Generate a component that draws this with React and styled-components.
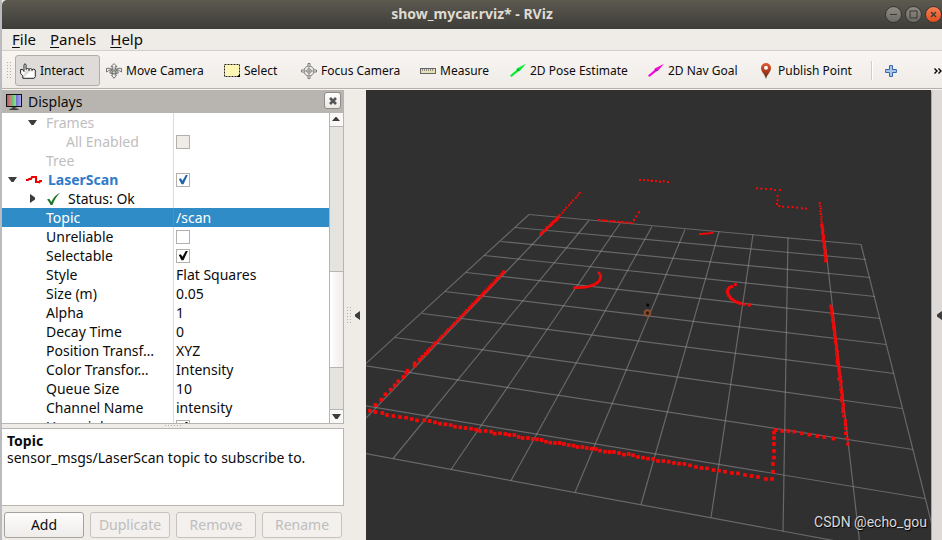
import React from 'react';
import styled, { createGlobalStyle, css } from 'styled-components';

const GlobalStyle = createGlobalStyle`
  * {
    box-sizing: border-box;
  }
  body {
    margin: 0;
    font-family: "Noto Sans", "Open Sans", sans-serif;
    font-size: 14px;
    color: #0c0c0c;
    overflow: hidden;
  }
  button, input {
    font: inherit;
    color: inherit;
    margin: 0;
  }
`

const Window = styled.div`
  height: 100vh;
  display: flex;
  flex-direction: column;
  background: #efebe7;
  border-left: 2px solid #b9bbbe;
`

// ---- title bar ----

const TitleBar = styled.header`
  flex: none;
  height: 29px;
  display: grid;
  grid-template-columns: 1fr auto 1fr;
  align-items: center;
  background: linear-gradient(#5c5a4f, #56544c 20%, #3d3c38);
  border-top-left-radius: 5px;
`
const Title = styled.h1`
  grid-column: 2;
  margin: 0;
  padding-bottom: 2px;
  font-size: 14px;
  line-height: 20px;
  font-weight: 700;
  color: #dfdbd2;
`
const WindowButtons = styled.div`
  display: flex;
  justify-content: flex-end;
  gap: 3px;
`
const WindowButton = styled.button`
  width: 17px;
  height: 17px;
  padding: 0;
  border: 1px solid #35342f;
  border-radius: 50%;
  background: ${({ $close }) => ($close ? 'linear-gradient(#f58055, #e2501f)' : 'linear-gradient(#8d8b83, #6d6b65)')};
  color: #3a3934;
  svg {
    display: block;
  }
`

// ---- menu ----

const MenuBar = styled.nav`
  flex: none;
  height: 22px;
  display: flex;
  align-items: center;
  gap: 14px;
  padding: 0 0 2px 10px;
  border-bottom: 1px solid #d2cfca;
`
const MenuItem = styled.button`
  padding: 0;
  border: 0;
  background: none;
  font-size: 15px;
  line-height: 20px;
  u {
    text-decoration-thickness: 1px;
    text-underline-offset: 2px;
  }
`

// ---- tool bar ----

const ToolBar = styled.div`
  flex: none;
  height: 39px;
  display: flex;
  align-items: center;
  gap: 1px;
  padding: 1px 0 0 5px;
  background: linear-gradient(#f8f5f2, #efebe7);
  border-bottom: 1px solid #f6f3f0;
  box-shadow: inset 0 -1px #b5b1ad;
`
const Grip = styled.div`
  flex: none;
  width: ${({ $wide }) => ($wide ? '17px' : '4px')};
  height: ${({ $wide }) => ($wide ? '2px' : '17px')};
  background: conic-gradient(from 270deg at 1px 1px, #b0aca7 90deg, transparent 0) 0 0 / 3px 3px;
`
const ToolGrip = styled(Grip)`
  margin-right: 3px;
`
const ToolButton = styled.button`
  flex: none;
  width: ${({ $width }) => $width}px;
  height: 31px;
  padding: 0 0 0 4px;
  display: flex;
  align-items: center;
  gap: 4px;
  font-size: 12px;
  white-space: nowrap;
  border: 1px solid transparent;
  border-radius: 3px;
  background: none;
  ${({ $pressed }) => $pressed && css`
    border-color: #b1ada9;
    background: #dfdbd8;
  `}
  svg {
    flex: none;
  }
`
const ToolSeparator = styled.div`
  width: 2px;
  height: 19px;
  margin-right: 11px;
  background: linear-gradient(90deg, #d0ccc8 50%, #fff 50%);
`
const IconButton = styled.button`
  padding: 0;
  border: 0;
  background: none;
  display: flex;
`
const MoreButton = styled(IconButton)`
  margin-left: auto;
`

// ---- work area ----

const Main = styled.main`
  flex: 1;
  min-height: 0;
  display: flex;
`
const Dock = styled.section`
  flex: none;
  width: 342px;
  display: flex;
  flex-direction: column;
  padding-bottom: 2px;
`
const DockHeader = styled.div`
  flex: none;
  height: 23px;
  display: flex;
  align-items: center;
  gap: 6px;
  padding: 0 3px 0 4px;
  background: #b8b4b0;
`
const DockTitle = styled.h2`
  flex: 1;
  margin: 0;
  font-size: 14px;
  font-weight: 400;
  line-height: 20px;
`
const CloseButton = styled.button`
  width: 17px;
  height: 17px;
  padding: 0;
  margin-bottom: 2px;
  display: grid;
  place-items: center;
  border: 1px solid #8f8c88;
  border-radius: 3px;
  background: linear-gradient(#fff, #ebe8e5);
`
const TreeFrame = styled.div`
  flex: 1;
  min-height: 0;
  display: flex;
  background: #fff;
  border-right: 1px solid #b8b4b0;
  border-bottom: 1px solid #b8b4b0;
`
const TreeScroll = styled.div`
  flex: 1;
  min-width: 0;
  overflow: hidden;
`
const Tree = styled.table`
  width: 100%;
  table-layout: fixed;
  border-collapse: separate;
  border-spacing: 0;
`
const Row = styled.tr`
  height: 19px;
  line-height: 19px;
  color: ${({ $selected, $muted }) => ($selected ? '#fff' : $muted ? '#bebebe' : 'inherit')};
  background: ${({ $selected }) => ($selected ? '#308cc6' : 'none')};
`
const NameCell = styled.th`
  width: 172px;
  padding: 0;
  font-weight: 400;
  text-align: left;
  border-right: 1px solid ${({ $selected }) => ($selected ? '#4c8fbd' : '#dcdcdc')};
`
const Name = styled.div`
  height: 19px;
  display: flex;
  align-items: center;
  padding-left: ${({ $depth }) => $depth * 20}px;
  white-space: nowrap;
  ${({ $title }) => $title && css`
    font-weight: 700;
    color: #2f7bc8;
  `}
`
const Expander = styled.span`
  flex: none;
  width: 20px;
  margin-right: 4px;
  display: flex;
  justify-content: center;
`
const RowIcon = styled.span`
  flex: none;
  display: flex;
  margin-right: 6px;
`
const ValueCell = styled.td`
  padding: 0 0 0 2px;
`
const CheckBox = styled.input`
  appearance: none;
  display: grid;
  place-items: center;
  width: 14px;
  height: 14px;
  border: 1px solid #b3b0ac;
  background: #fff;
  color: #0c0c0c;
  &:disabled {
    background: #efebe7;
  }
  &:checked::before {
    content: "";
    width: 10px;
    height: 10px;
    background: ${({ $blue }) => ($blue ? '#1f66ad' : '#0c0c0c')};
    clip-path: polygon(8% 45%, 28% 38%, 45% 62%, 80% 0, 98% 5%, 55% 98%, 35% 98%);
  }
`

const ScrollBar = styled.div`
  flex: none;
  width: 14px;
  display: flex;
  flex-direction: column;
  border-left: 1px solid #b8b4b0;
  background: #e4e3e0;
`
const ScrollArrow = styled.button`
  height: 14px;
  padding: 0;
  display: grid;
  place-items: center;
  border: 0 solid #b8b4b0;
  border-width: ${({ $down }) => ($down ? '1px 0 0' : '0 0 1px')};
  background: #f9f8f7;
`
const ScrollGap = styled.div`
  flex: ${({ $part }) => $part};
`
const ScrollThumb = styled.div`
  flex: 96;
  border: 1px solid #b8b4b0;
  border-width: 1px 0;
  background: linear-gradient(90deg, #fff, #efedeb);
`

const Splitter = styled.div`
  flex: none;
  height: 4px;
  display: flex;
  align-items: center;
  justify-content: center;
`
const Description = styled.div`
  flex: none;
  height: 78px;
  padding: 3px 5px;
  border: 1px solid #b8b4b0;
  border-left: 0;
  background: #fff;
  line-height: 17px;
  p {
    margin: 0;
  }
`
const Actions = styled.div`
  flex: none;
  display: flex;
  gap: 6px;
  padding: 6px 2px 0;
`
const ActionButton = styled.button`
  flex: 1;
  min-width: 0;
  height: 26px;
  padding: 0 0 2px;
  border: 1px solid #a5a19d;
  border-radius: 3px;
  background: linear-gradient(#fdfcfc, #efecea);
  &:disabled {
    color: #bebebe;
    border-color: #c6c3bf;
    background: #f3f0ed;
  }
`
const SideHandle = styled.div`
  flex: none;
  width: 22px;
  display: flex;
  align-items: center;
  justify-content: space-between;
  padding: 0 6px 0 3px;
`
const RightHandle = styled.button`
  flex: none;
  width: 11px;
  padding: 0;
  display: flex;
  align-items: center;
  justify-content: flex-end;
  border: 0;
  border-left: 1px solid #aaa6a2;
  border-top-left-radius: 3px;
  background: #dedad7;
`
const Viewport = styled.div`
  flex: 1;
  min-width: 0;
  position: relative;
  background: #303030;
  overflow: hidden;
`
const Scene = styled.svg`
  display: block;
  width: 100%;
  height: 100%;
`
const Credit = styled.span`
  position: absolute;
  right: 4px;
  bottom: 8px;
  font: 14px/20px Roboto, "Liberation Sans", sans-serif;
  color: #d9d9d9;
  text-shadow: 1px 1px 1px #000;
`

// ---- icons ----

const HandIcon = () => (
  <svg width="16" height="16" viewBox="0 0 16 16">
    <path
      d="M2.8 15.3 V12.8 L.6 10.3 V6.5 H2.6 L4 8.5 V1.6 Q5 -.1 6 1.6 V6.6 M6 6.2 Q7.5 4.8 9 6.2 V8 M9 6.2 Q10.5 4.9 12 6.4 V8.2 M12 6.8 Q14 5.4 15.3 7 V13.6 L14.2 15.3 H2.8"
      fill="#fff"
      stroke="#262626"
      strokeLinejoin="round"
    />
  </svg>
)

const MoveIcon = () => (
  <svg width="16" height="16" viewBox="0 0 16 16" fill="#f4f2ef" stroke="#696969" strokeWidth=".9">
    <path d="M8 .6 L11 3.6 H9.2 V6.2 H12.4 V5.4 H15.5 V9 L13.6 7.8 H9.2 V12 H10.6 L8 15.3 L5.4 12 H6.8 V7.8 H2.4 L.5 9 V5.4 H3.6 V6.2 H6.8 V3.6 H5 Z" />
    <path d="M3.5 9.8 L6 7.4 L3.8 5.4 M12.5 9.8 L10 7.4 L12.2 5.4 M5.3 5 L8 7.4 L10.7 5 M4.8 10.4 L8 7.4 L11.2 10.4 M3.6 9.8 Q8 12 12.4 9.8" fill="none" />
  </svg>
)

const SelectIcon = () => (
  <svg width="16" height="16" viewBox="0 0 16 16">
    <rect x=".5" y="1.5" width="15" height="12" fill="#fff6b5" stroke="#222" strokeDasharray="2 1" />
    <path d="M16 11 V14 H12.5 Z" />
  </svg>
)

const FocusIcon = () => (
  <svg width="16" height="16" viewBox="0 0 16 16" fill="none" stroke="#787878">
    <circle cx="8" cy="8" r="5" />
    <circle cx="8" cy="8" r="2.3" strokeWidth=".8" />
    <path d="M8 3 V13 M3 8 H13" strokeWidth=".8" />
    <path d="M7 3 V.5 H9 V3 M7 13 V15.5 H9 V13 M3 7 H.5 V9 H3 M13 7 H15.5 V9 H13" fill="#f4f2ef" />
  </svg>
)

const MeasureIcon = () => (
  <svg width="16" height="16" viewBox="0 0 16 16">
    <rect x=".5" y="5.5" width="15" height="5" fill="#e8e0b0" stroke="#666" />
    <path d="M2.5 6 V8 M4.5 6 V8 M6.5 6 V8 M8.5 6 V8 M10.5 6 V8 M12.5 6 V8" stroke="#777" strokeWidth=".8" />
  </svg>
)

const ArrowIcon = ({ color }) => (
  <svg width="16" height="16" viewBox="0 0 16 16">
    <path d="M0 12.6 L6.4 7 L6.8 5.4 L16 .8 L9.8 8 L8.2 8.6 L1.4 14 Z" fill={color} />
    <path d="M7.4 6 L8.8 8" stroke="#155" strokeWidth="1.2" opacity=".6" />
  </svg>
)

const PinIcon = () => (
  <svg width="16" height="16" viewBox="0 0 16 16">
    <defs>
      <linearGradient id="pin" x1="0" y1="0" x2="0" y2="1">
        <stop offset="0" stopColor="#e9552f" />
        <stop offset=".55" stopColor="#a6391f" />
        <stop offset="1" stopColor="#3d3a22" />
      </linearGradient>
    </defs>
    <path d="M8 16 C6.8 11 3 9.2 3 5 A5 5 0 0 1 13 5 C13 9.2 9.2 11 8 16 Z" fill="url(#pin)" />
    <circle cx="8" cy="4.8" r="2" fill="#fff" />
  </svg>
)

const PlusIcon = () => (
  <svg width="12" height="12" viewBox="0 0 12 12">
    <path d="M4.5 .6 H7.5 V4.5 H11.4 V7.5 H7.5 V11.4 H4.5 V7.5 H.6 V4.5 H4.5 Z" fill="#a9c6ea" stroke="#3565a8" strokeLinejoin="round" />
  </svg>
)

const MoreIcon = () => (
  <svg width="8" height="8" viewBox="0 0 8 8" fill="none" stroke="#000" strokeWidth="1.4">
    <path d="M.5 1.5 L3 4 L.5 6.5 M4.5 1.5 L7 4 L4.5 6.5" />
  </svg>
)

const MonitorIcon = () => (
  <svg width="16" height="16" viewBox="0 0 16 16">
    <defs>
      <linearGradient id="screen">
        <stop offset="0" stopColor="#a85a5a" />
        <stop offset=".33" stopColor="#d08c8c" />
        <stop offset=".33" stopColor="#62bc62" />
        <stop offset=".66" stopColor="#96e096" />
        <stop offset=".66" stopColor="#7272cc" />
        <stop offset="1" stopColor="#b0b0f4" />
      </linearGradient>
    </defs>
    <rect x=".5" y=".5" width="15" height="12" fill="url(#screen)" stroke="#111" />
    <path d="M8 13 V15 M5.5 14 H10.5 M3.5 15.3 H12.5" stroke="#222" />
  </svg>
)

const ScanIcon = () => (
  <svg width="16" height="10" viewBox="0 0 16 10" fill="none" stroke="#f00000" strokeWidth="2">
    <path d="M0 5 H2 L3 4 H5 L6 2 H10 V7 H13 V8 L14 6 H16" />
  </svg>
)

const OkIcon = () => (
  <svg width="16" height="14" viewBox="0 0 16 14">
    <path d="M1 7.6 L3.2 6.8 L5.4 10 C7.4 6 9.6 3 14.2 .6 C10.8 4 8.6 8 6.4 13 H4.6 C3.6 10.8 2.5 9 1 7.6 Z" fill="#1d7421" />
  </svg>
)

const Triangle = ({ dir }) => {
  const shapes = {
    down: 'M0 0 H9 L5.5 5 H3.5 Z',
    up: 'M3.5 0 H4.5 L8 4 H0 Z',
    right: 'M0 0 L5 3.5 V5.5 L0 9 Z',
    left: 'M5 0 L0 3.5 V5.5 L5 9 Z',
  }
  const wide = dir === 'down' || dir === 'up'
  return (
    <svg width={wide ? 9 : 5} height={wide ? 5 : 9} fill="#3c3c3c">
      <path d={shapes[dir]} />
    </svg>
  )
}

// ---- 3D view ----

// ends of the grid lines, far edge to near edge
const columns = [
  [529, 214, 284, 438], [558, 217, 337, 448], [589, 220, 393, 458],
  [620, 223, 451, 469], [652, 226, 511, 480], [685, 229, 575, 492],
  [719, 231, 641, 504], [753, 234, 711, 517], [788, 237, 783, 531],
  [825, 241, 860, 545], [861, 244, 941, 560],
]
const rows = [
  [529, 214, 861, 244], [515, 227, 866, 259], [501, 241, 870, 277],
  [484, 255, 875, 296], [466, 272, 880, 318], [445, 291, 886, 344],
  [422, 313, 894, 373], [395, 337, 902, 408], [364, 365, 913, 449],
  [327, 399, 925, 498], [284, 438, 941, 560],
]

// laser hits, in thirds of a scene unit from the origin of each sector
const sectors = [
  {
    x: 366, y: 350, size: 11,
    hits: [[186, 5], [179, 12], [169, 20], [161, 29], [146, 40], [146, 47], [125, 62], [121, 69], [112, 81], [97, 94],
      [86, 106], [74, 119], [58, 133], [46, 149], [28, 165], [12, 182], [28, 186], [49, 189], [63, 195], [82, 198],
      [102, 201], [120, 203], [137, 207], [153, 211], [175, 211], [191, 213], [207, 217], [222, 221], [238, 223],
      [254, 225], [267, 230], [283, 232], [299, 234], [315, 236], [330, 239], [342, 243], [359, 243], [375, 245],
      [386, 251], [402, 250], [418, 252], [430, 255], [445, 255], [458, 261], [470, 264], [486, 264], [500, 267],
      [513, 268], [527, 270], [540, 275], [553, 278], [567, 279], [581, 279], [594, 282], [608, 285], [622, 287],
      [634, 291], [649, 291], [662, 294], [676, 296], [690, 297], [702, 302], [717, 305], [731, 306], [744, 306],
      [759, 309], [774, 314], [788, 312], [801, 316], [816, 321], [831, 323], [846, 326], [861, 327]],
  },
  {
    x: 650, y: 350, size: 11,
    hits: [[24, 333], [40, 333], [56, 335], [72, 339], [87, 341], [103, 342], [120, 346], [138, 351], [155, 354],
      [171, 355], [191, 360], [207, 362], [225, 365], [246, 369], [264, 370], [285, 375], [305, 378], [324, 381],
      [348, 387], [366, 387], [369, 365], [369, 342], [372, 323], [372, 303], [372, 282], [372, 264], [372, 248],
      [378, 240], [397, 243], [415, 243], [433, 245], [456, 250], [478, 254], [502, 258], [523, 261], [550, 266]],
  },
  {
    x: 650, y: 350, size: 10,
    hits: [[561, 5], [561, 15], [563, 25], [562, 35], [564, 43], [567, 52], [567, 62], [569, 72], [567, 87], [571, 82],
      [573, 95], [572, 105], [573, 118], [575, 126], [577, 135], [575, 144], [576, 153], [580, 165], [579, 175],
      [579, 185], [582, 198], [586, 213], [586, 223], [588, 235], [587, 250], [591, 266], [594, 282]],
  },
  {
    x: 650, y: 170, size: 6,
    hits: [[321, 55], [334, 56], [348, 57], [363, 57], [375, 60], [390, 60], [383, 78], [383, 91], [381, 102],
      [388, 108], [399, 110], [414, 111], [428, 111], [441, 113], [456, 115], [468, 116],
      [150, 192], [156, 192], [162, 191], [168, 191], [175, 190], [182, 189], [188, 188],
      [5, 33], [18, 33], [30, 35], [41, 34], [54, 36]],
  },
  {
    x: 366, y: 170, size: 6,
    hits: [[822, 30], [834, 30], [846, 31], [858, 32], [804, 150], [811, 139], [819, 127]],
  },
  {
    x: 650, y: 170, size: 9,
    hits: [[256, 344], [245, 350], [238, 353], [234, 359], [232, 365], [234, 371], [236, 376], [240, 381], [243, 386],
      [249, 390], [255, 394], [263, 397], [270, 400], [282, 403], [298, 405]],
  },
  {
    x: 366, y: 170, size: 8,
    hits: [[699, 309], [703, 315], [704, 321], [702, 327], [700, 332], [695, 337], [690, 341], [684, 344], [678, 346],
      [672, 348], [666, 350], [660, 351], [653, 352], [646, 352], [639, 353], [632, 353], [626, 353]],
  },
]

// straight walls: start, end, number of hits, size
const walls = [
  [580, 193, 560, 215, 10, 2],
  [559, 217, 541, 234, 11, 3],
  [599, 220, 632, 223, 13, 2],
  [504, 272, 428, 351, 38, 3],
  [820, 203, 822, 225, 9, 2],
  [822, 225, 826, 261, 16, 3],
  [831, 306, 837, 351, 20, 3],
]

const Hit = ({ x, y, size }) => (
  <rect x={x - size / 2} y={y - size / 2} width={size} height={size} />
)

const SceneView = () => (
  <Scene viewBox="366 90 565 450" preserveAspectRatio="xMidYMid slice" role="img" aria-label="Laser scan">
    <g stroke="#a0a0a4" strokeOpacity=".5" strokeWidth="1.2">
      {[...columns, ...rows].map(([x1, y1, x2, y2], i) => (
        <line key={i} x1={x1} y1={y1 + 0.5} x2={x2} y2={y2 + 0.5} />
      ))}
    </g>
    <g>
      <circle cx="647.5" cy="313" r="3" fill="#6b3a1e" stroke="#8a5232" strokeWidth="1.5" />
      <circle cx="647.5" cy="313" r="1.2" fill="#1b1008" />
      <circle cx="647.7" cy="305" r="1.5" fill="#050505" />
    </g>
    <g fill="#f40808">
      {walls.map(([x1, y1, x2, y2, count, size], w) => (
        Array.from({ length: count }, (_, i) => {
          const t = i / (count - 1)
          const wobble = ((i * 7) % 3 - 1) * 0.3
          return <Hit key={`${w}-${i}`} x={x1 + (x2 - x1) * t + wobble} y={y1 + (y2 - y1) * t} size={size} />
        })
      ))}
      {sectors.map((sector, s) => (
        <g key={s} transform={`translate(${sector.x} ${sector.y}) scale(.3333)`}>
          {sector.hits.map(([x, y], i) => <Hit key={i} x={x} y={y} size={sector.size} />)}
        </g>
      ))}
    </g>
  </Scene>
)

// ---- data ----

const tools = [
  { label: 'Interact', icon: <HandIcon />, width: 85, pressed: true },
  { label: 'Move Camera', icon: <MoveIcon />, width: 117 },
  { label: 'Select', icon: <SelectIcon />, width: 76 },
  { label: 'Focus Camera', icon: <FocusIcon />, width: 118 },
  { label: 'Measure', icon: <MeasureIcon />, width: 89 },
  { label: '2D Pose Estimate', icon: <ArrowIcon color="#00ee2c" />, width: 137 },
  { label: '2D Nav Goal', icon: <ArrowIcon color="#f808d8" />, width: 109 },
  { label: 'Publish Point', icon: <PinIcon />, width: 117 },
]

const properties = [
  { name: 'Frames', depth: 1, arrow: 'down', muted: true },
  { name: 'All Enabled', depth: 2, muted: true, checked: false, disabled: true },
  { name: 'Tree', depth: 1, muted: true },
  { name: 'LaserScan', depth: 0, arrow: 'down', icon: <ScanIcon />, title: true, checked: true },
  { name: 'Status: Ok', depth: 1, arrow: 'right', icon: <OkIcon /> },
  { name: 'Topic', depth: 1, value: '/scan', selected: true },
  { name: 'Unreliable', depth: 1, checked: false },
  { name: 'Selectable', depth: 1, checked: true },
  { name: 'Style', depth: 1, value: 'Flat Squares' },
  { name: 'Size (m)', depth: 1, value: '0.05' },
  { name: 'Alpha', depth: 1, value: '1' },
  { name: 'Decay Time', depth: 1, value: '0' },
  { name: 'Position Transf…', depth: 1, value: 'XYZ' },
  { name: 'Color Transfor…', depth: 1, value: 'Intensity' },
  { name: 'Queue Size', depth: 1, value: '10' },
  { name: 'Channel Name', depth: 1, value: 'intensity' },
  { name: 'Use rainbow', depth: 1, checked: true },
]

const PropertyRow = ({ item }) => (
  <Row $selected={item.selected} $muted={item.muted}>
    <NameCell scope="row" $selected={item.selected}>
      <Name $depth={item.depth} $title={item.title}>
        <Expander>{item.arrow && <Triangle dir={item.arrow} />}</Expander>
        {item.icon && <RowIcon>{item.icon}</RowIcon>}
        {item.name}
      </Name>
    </NameCell>
    <ValueCell>
      {item.checked === undefined ? item.value : (
        <CheckBox
          type="checkbox"
          aria-label={item.name}
          defaultChecked={item.checked}
          disabled={item.disabled}
          $blue={item.title}
        />
      )}
    </ValueCell>
  </Row>
)

const App = () => {
  return (
    <Window>
      <GlobalStyle />
      <TitleBar>
        <Title>show_mycar.rviz* - RViz</Title>
        <WindowButtons>
          <WindowButton aria-label="Minimize">
            <svg width="15" height="15" stroke="currentColor"><path d="M4 7.5 H11" /></svg>
          </WindowButton>
          <WindowButton aria-label="Maximize">
            <svg width="15" height="15" stroke="currentColor" fill="none"><rect x="4" y="4" width="7" height="7" /></svg>
          </WindowButton>
          <WindowButton $close aria-label="Close">
            <svg width="15" height="15" stroke="currentColor" strokeWidth="1.4"><path d="M5 5 L10 10 M10 5 L5 10" /></svg>
          </WindowButton>
        </WindowButtons>
      </TitleBar>
      <MenuBar>
        <MenuItem><u>F</u>ile</MenuItem>
        <MenuItem><u>P</u>anels</MenuItem>
        <MenuItem><u>H</u>elp</MenuItem>
      </MenuBar>
      <ToolBar>
        <ToolGrip />
        {tools.map(tool => (
          <ToolButton key={tool.label} $width={tool.width} $pressed={tool.pressed}>
            {tool.icon}
            {tool.label}
          </ToolButton>
        ))}
        <ToolSeparator />
        <IconButton aria-label="Add tool"><PlusIcon /></IconButton>
        <MoreButton aria-label="More tools"><MoreIcon /></MoreButton>
      </ToolBar>
      <Main>
        <Dock>
          <DockHeader>
            <MonitorIcon />
            <DockTitle>Displays</DockTitle>
            <CloseButton aria-label="Close panel">
              <svg width="8" height="8" stroke="#555" strokeWidth="2.6"><path d="M1 1 L7 7 M7 1 L1 7" /></svg>
            </CloseButton>
          </DockHeader>
          <TreeFrame>
            <TreeScroll>
              <Tree>
                <tbody>
                  {properties.map(item => <PropertyRow key={item.name} item={item} />)}
                </tbody>
              </Tree>
            </TreeScroll>
            <ScrollBar>
              <ScrollArrow aria-label="Scroll up"><Triangle dir="up" /></ScrollArrow>
              <ScrollGap $part={146} />
              <ScrollThumb />
              <ScrollGap $part={41} />
              <ScrollArrow $down aria-label="Scroll down"><Triangle dir="down" /></ScrollArrow>
            </ScrollBar>
          </TreeFrame>
          <Splitter><Grip $wide /></Splitter>
          <Description>
            <p><b>Topic</b></p>
            <p>sensor_msgs/LaserScan topic to subscribe to.</p>
          </Description>
          <Actions>
            <ActionButton>Add</ActionButton>
            <ActionButton disabled>Duplicate</ActionButton>
            <ActionButton disabled>Remove</ActionButton>
            <ActionButton disabled>Rename</ActionButton>
          </Actions>
        </Dock>
        <SideHandle>
          <Grip />
          <Triangle dir="left" />
        </SideHandle>
        <Viewport>
          <SceneView />
          <Credit>CSDN @echo_gou</Credit>
        </Viewport>
        <RightHandle aria-label="Show right panel"><Triangle dir="left" /></RightHandle>
      </Main>
    </Window>
  )
}

export default App
